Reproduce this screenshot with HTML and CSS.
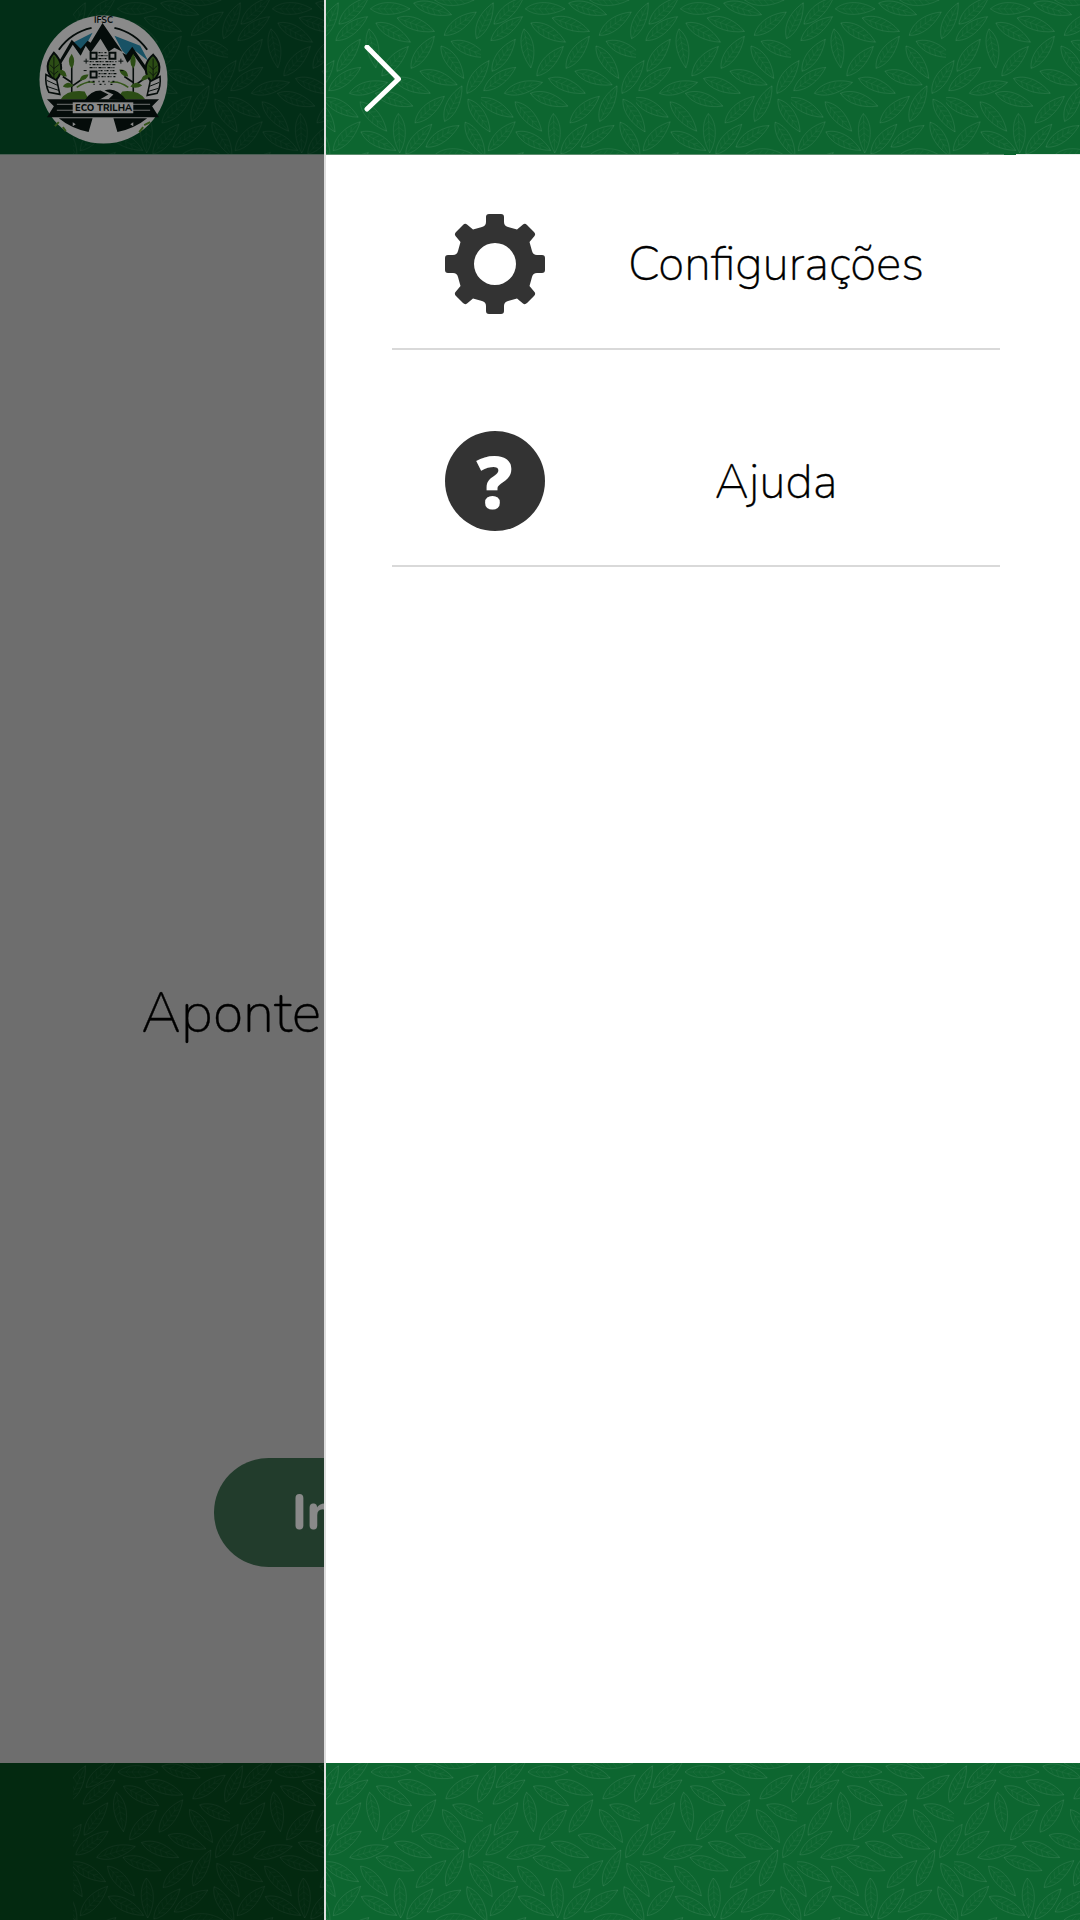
FILE: index.html
```html
<!DOCTYPE html>
<html lang="pt-BR">
<head>
<meta charset="utf-8">
<title>Eco Trilha</title>
<link rel="stylesheet" href="styles.css">
</head>
<body>
<div class="app">
  <header class="bar bar-top">
    <svg class="logo" viewBox="0 0 130 130" role="img" aria-label="Logo Eco Trilha">
      <circle cx="65" cy="65" r="64.5" fill="#f6f6f6"/>
      <text x="65" y="8" class="logo-ifsc">IFSC</text>
      <path d="M20 35 A55 55 0 0 1 53 13 M76 13 A55 55 0 0 1 109 35" fill="none" stroke="#0a1713" stroke-width="2"/>
      <path d="M41 40 L34 28 L54 18 L46 33Z" fill="#2b92b5"/>
      <path d="M76 21 L102 31 L110 46 L97 36 L90 42 L84 36Z" fill="#2b92b5"/>
      <path d="M64 8 L84 37 L76 33 L70 37 L62 24 L52 38 L47 31 L42 41 L34 30 L18 56 L16 54 L33 25 L42 34 L49 26 L52 28Z" fill="#0a1713"/>
      <path d="M94 32 L112 58 L108 58 L96 41 L89 48 L84 38 L88 40Z" fill="#0a1713"/>
      <path d="M15 38 Q7 48 9 56 Q11 63 17 66 Q24 58 22 50 Q21 44 15 38Z" fill="#4f8a26" stroke="#0a1713" stroke-width="2"/>
      <path d="M115 40 Q123 48 121 57 Q119 64 113 67 Q106 60 108 50 Q110 44 115 40Z" fill="#4f8a26" stroke="#0a1713" stroke-width="2"/>
      <path d="M15 42 V64 M11 50 L15 54 M20 50 L15 54 M11 56 L15 60 M20 56 L15 60 M115 44 V65 M111 51 L115 55 M119 51 L115 55 M111 57 L115 61 M119 57 L115 61" fill="none" stroke="#0a1713" stroke-width=".8"/>
      <path d="M7 60 L18 66 L21 80 L10 78 Q6 70 7 60Z M122 62 L112 67 L109 81 L119 79 Q123 72 122 62Z" fill="#f6f6f6" stroke="#0a1713" stroke-width="1.6"/>
      <path d="M8 66 L19 71 M8 72 L20 76 M121 68 L111 72 M120 74 L110 77" fill="none" stroke="#0a1713" stroke-width="1"/>
      <path d="M33 80 V50 M33 68 L24 62 M33 72 L43 65 M95 80 V52 M95 68 L86 62 M95 72 L105 65" stroke="#0a1713" stroke-width="1.6" fill="none"/>
      <path d="M33 54 Q27 47 33 39 Q38 47 33 54Z M26 62 Q20 61 19 55 Q27 54 28 62Z M42 66 Q48 66 50 60 Q42 59 41 66Z M24 72 Q29 65 35 71 Q30 75 24 72Z M95 54 Q89 47 95 39 Q100 47 95 54Z M88 62 Q82 61 81 55 Q89 54 90 62Z M104 66 Q110 66 112 60 Q104 59 103 66Z M92 72 Q98 65 104 71 Q98 75 92 72Z" fill="#4f8a26"/>
      <path d="M22 85 Q28 75 46 77 L50 85Z M107 85 Q100 75 84 77 L78 85Z" fill="#4f8a26"/>
      <path d="M38 73 Q48 66 56 68 M90 73 Q80 66 72 68" fill="none" stroke="#5e9a2e" stroke-width="1.6"/>
      <path d="M46 86 Q52 76 62 76 L70 80 L60 86Z M70 85 L75 80 L66 76 Q78 72 88 86Z" fill="#0a1713"/>
      <path d="M8 85 H121 L114 92 L121 103 H8 L15 92Z" fill="#0a1713"/>
      <path d="M18 90 H112 M18 96 H112" stroke="#f6f6f6" stroke-width=".8"/>
      <rect x="34" y="88" width="61" height="11" fill="#f6f6f6"/>
      <text x="65" y="97" class="logo-name">ECO TRILHA</text>
      <path d="M20 104 H54 L50 118 Q32 114 20 104Z M109 104 H75 L79 118 Q97 114 109 104Z" fill="#0a1713"/>
      <path d="M20 108 L16 112 M27 117 L24 113 M106 111 L112 108 M101 118 L105 113" stroke="#5e9a2e" stroke-width="2"/>
      <path d="M34 108 l3 2 -3 2z M95 108 l-3 2 3 2z" fill="#f6f6f6"/>
      <path class="qr-finder" d="M51 37 h8 v8 h-8z M53 39 v4 h4 v-4z M70 37 h8 v8 h-8z M72 39 v4 h4 v-4z M51 56 h8 v8 h-8z M53 58 v4 h4 v-4z"/>
      <g class="qr-dots">
        <path stroke-dasharray="2 1 1 2" d="M60 38 H69"/>
        <path stroke-dasharray="1 1 3 1" d="M60 41 H69"/>
        <path stroke-dasharray="3 1 1 1 2 1" d="M60 44 H69"/>
        <path stroke-dasharray="2 1 1 2 3 1" d="M51 47 H78"/>
        <path stroke-dasharray="1 2 3 1 2 1" d="M51 50 H78"/>
        <path stroke-dasharray="3 1 1 1 1 2" d="M51 53 H78"/>
        <path stroke-dasharray="1 1 2 2" d="M60 56 H78"/>
        <path stroke-dasharray="2 1 1 1 3 2" d="M60 59 H78"/>
        <path stroke-dasharray="1 2 2 1" d="M60 62 H78"/>
        <path stroke-dasharray="1 3 2 4" d="M50 67 H80"/>
        <path stroke-dasharray="1 5 2 3" d="M55 70 H76"/>
      </g>
      <path d="M45 46.5 h5 M80 46.5 h5 M47.5 44 v5 M82.5 44 v5 M45 56 h3 M82 56 h3" stroke="#0a1713" stroke-width="1"/>
    </svg>
  </header>
  <main class="content">
    <p class="prompt">Aponte a câmera</p>
    <button class="start" type="button">Iniciar leitura</button>
  </main>
  <footer class="bar bar-bottom"></footer>
</div>
<div class="scrim"></div>
<aside class="drawer">
  <div class="drawer-head">
    <svg class="chevron" viewBox="0 0 38 68"><path d="M3 2 L34.5 34 L3 64"/></svg>
  </div>
  <nav class="menu">
    <a class="menu-row">
      <svg class="menu-icon" viewBox="0 0 100 100"><path fill-rule="evenodd" d="M44 0 H56 Q59 0 59 3 V8 Q59 12 63 13 L72 15.5 L78 10.5 Q80 9 82 11 L89 18 Q91 20 89.5 22 L84.5 28 L87 37 Q88 41 92 41 H97 Q100 41 100 44 V56 Q100 59 97 59 H92 Q88 59 87 63 L84.5 72 L89.5 78 Q91 80 89 82 L82 89 Q80 91 78 89.5 L72 84.5 L63 87 Q59 88 59 92 V97 Q59 100 56 100 H44 Q41 100 41 97 V92 Q41 88 37 87 L28 84.5 L22 89.5 Q20 91 18 89 L11 82 Q9 80 10.5 78 L15.5 72 L13 63 Q12 59 8 59 H3 Q0 59 0 56 V44 Q0 41 3 41 H8 Q12 41 13 37 L15.5 28 L10.5 22 Q9 20 11 18 L18 11 Q20 9 22 10.5 L28 15.5 L37 13 Q41 12 41 8 V3 Q41 0 44 0Z M50 29 A21 21 0 1 0 50 71 A21 21 0 1 0 50 29Z"/></svg>
      <span class="menu-label">Configurações</span>
    </a>
    <a class="menu-row">
      <svg class="menu-icon" viewBox="0 0 100 100"><circle cx="50" cy="50" r="50"/><text x="49.5" y="77.5" class="help-mark">?</text></svg>
      <span class="menu-label menu-label-low">Ajuda</span>
    </a>
  </nav>
  <div class="drawer-foot"></div>
</aside>
</body>
</html>
```

FILE: styles.css
```css
* { box-sizing: border-box; }
:root {
  --leaf: url("data:image/svg+xml,%3Csvg xmlns='http://www.w3.org/2000/svg' xmlns:xlink='http://www.w3.org/1999/xlink' viewBox='0 0 157 157'%3E%3Cdefs%3E%3Cg id='l' fill='none' stroke='%23fff' stroke-opacity='.13' stroke-width='.6'%3E%3Cpath d='M-20 0C-11 -8 5 -9 20 0C6 7 -10 8 -20 0Z'/%3E%3Cpath stroke-opacity='.06' d='M-20 0H20M-12 0L-8 -4M-6 0L-2 -5M0 0L4 -5M6 0L10 -3M-12 0L-8 4M-6 0L-2 5M0 0L4 5M6 0L10 3'/%3E%3C/g%3E%3C/defs%3E%3Cuse xlink:href='%23l' transform='translate(28 11) rotate(-42)'/%3E%3Cuse xlink:href='%23l' transform='translate(28 168) rotate(-42)'/%3E%3Cuse xlink:href='%23l' transform='translate(65 9)'/%3E%3Cuse xlink:href='%23l' transform='translate(108 9) rotate(17)'/%3E%3Cuse xlink:href='%23l' transform='translate(136 24) rotate(-36)'/%3E%3Cuse xlink:href='%23l' transform='translate(26 29) rotate(-37)'/%3E%3Cuse xlink:href='%23l' transform='translate(68 33) rotate(29)'/%3E%3Cuse xlink:href='%23l' transform='translate(91 25) rotate(20)'/%3E%3Cuse xlink:href='%23l' transform='translate(4 21) rotate(-65)'/%3E%3Cuse xlink:href='%23l' transform='translate(161 21) rotate(-65)'/%3E%3Cuse xlink:href='%23l' transform='translate(47 49) rotate(80)'/%3E%3Cuse xlink:href='%23l' transform='translate(23 56) rotate(-54)'/%3E%3Cuse xlink:href='%23l' transform='translate(70 62) rotate(-48)'/%3E%3Cuse xlink:href='%23l' transform='translate(98 53) rotate(-54)'/%3E%3Cuse xlink:href='%23l' transform='translate(128 63) rotate(55)'/%3E%3Cuse xlink:href='%23l' transform='translate(145 50) rotate(24)'/%3E%3Cuse xlink:href='%23l' transform='translate(19 80) rotate(-36)'/%3E%3Cuse xlink:href='%23l' transform='translate(43 89) rotate(-16)'/%3E%3Cuse xlink:href='%23l' transform='translate(87 87) rotate(22)'/%3E%3Cuse xlink:href='%23l' transform='translate(114 79) rotate(20)'/%3E%3Cuse xlink:href='%23l' transform='translate(69 101) rotate(19)'/%3E%3Cuse xlink:href='%23l' transform='translate(154 78) rotate(-56)'/%3E%3Cuse xlink:href='%23l' transform='translate(-3 78) rotate(-56)'/%3E%3Cuse xlink:href='%23l' transform='translate(129 105) rotate(-64)'/%3E%3Cuse xlink:href='%23l' transform='translate(105 111) rotate(-42)'/%3E%3Cuse xlink:href='%23l' transform='translate(15 109) rotate(29)'/%3E%3Cuse xlink:href='%23l' transform='translate(48 118) rotate(48)'/%3E%3Cuse xlink:href='%23l' transform='translate(155 117) rotate(56)'/%3E%3Cuse xlink:href='%23l' transform='translate(-2 117) rotate(56)'/%3E%3Cuse xlink:href='%23l' transform='translate(74 135) rotate(88)'/%3E%3Cuse xlink:href='%23l' transform='translate(21 138) rotate(-47)'/%3E%3Cuse xlink:href='%23l' transform='translate(53 143) rotate(28)'/%3E%3Cuse xlink:href='%23l' transform='translate(94 141) rotate(-49)'/%3E%3Cuse xlink:href='%23l' transform='translate(118 138) rotate(-33)'/%3E%3Cuse xlink:href='%23l' transform='translate(151 141) rotate(60)'/%3E%3Cuse xlink:href='%23l' transform='translate(-6 141) rotate(60)'/%3E%3Cuse xlink:href='%23l' transform='translate(130 157)'/%3E%3Cuse xlink:href='%23l' transform='translate(130 0)'/%3E%3C/svg%3E");
}
html, body { margin: 0; width: 1080px; height: 1920px; overflow: hidden; }
body { position: relative; font-family: "Nunito", "Lato", "Noto Sans", sans-serif; color: #000; }

.app { display: flex; flex-direction: column; height: 1920px; background: #c4c4c4; }
.bar { position: relative; flex: none; }
.bar::before {
  content: ""; position: absolute; top: 0; right: 0; bottom: 0; left: 73px;
  background: var(--leaf) 0 0 / 157px 157px repeat;
}
.bar-top {
  height: 155px; padding: 15px 0 0 39px;
  background: #05532a; border-bottom: 1px solid #86a896;
}
.bar-top::before { background-size: 155px 155px; }
.bar-bottom { height: 157px; background: #064a1e; }
.logo { position: relative; display: block; width: 129px; height: 129px; overflow: visible; }
.logo-ifsc { font: 700 9px "Nunito", sans-serif; text-anchor: middle; fill: #0a1713; }
.logo-name { font: 800 9.5px "Nunito", sans-serif; text-anchor: middle; fill: #0a1713; }
.qr-finder { fill: #0a1713; fill-rule: evenodd; }
.qr-dots { fill: none; stroke: #0a1713; stroke-width: 1.3; }

.content { flex: 1; display: flex; flex-direction: column; padding-top: 829px; }
.prompt { margin: 0 0 0 141px; font-size: 56px; font-weight: 200; -webkit-text-stroke: .35px #000; line-height: 60px; white-space: nowrap; }
.start {
  margin: 414px 0 0 214px; width: 652px; height: 109px; padding: 0 0 0 78px;
  border: 0; border-radius: 55px; background: #3d6b4f; color: #f4f4f4;
  font: 800 50px "Nunito", sans-serif; text-align: left;
}

.scrim { position: absolute; inset: 0; background: rgba(0, 0, 0, .44); }

.drawer {
  position: absolute; top: 0; bottom: 0; left: 324px; right: 0;
  display: flex; flex-direction: column;
  border-left: 2px solid #dedede; background: #fff;
}
.drawer-head {
  position: relative; height: 155px; flex: none; display: flex; align-items: center; padding-left: 38px;
  background: var(--leaf) 0 0 / 155px 155px, #0d6630;
  border-bottom: 1px solid #5d8d6f;
}
.drawer-head::after {
  content: ""; position: absolute; right: 0; bottom: -1px; width: 76px; height: 1px;
  background: linear-gradient(90deg, #0d6630 12px, #e6efe9 12px);
}
.chevron { display: block; width: 38px; height: 68px; margin-top: 3px; }
.chevron path { fill: none; stroke: #fff; stroke-width: 5; stroke-linecap: round; stroke-linejoin: round; }

.menu { flex: 1; padding: 0 80px 0 66px; }
.menu-row {
  display: flex; align-items: center; padding: 59px 0 34px 53px;
  border-bottom: 2px solid #d9d9d9;
}
.menu-row + .menu-row { padding-top: 81px; }
.menu-icon { display: block; flex: none; width: 100px; height: 100px; fill: #333; }
.help-mark { font: 800 72px "Open Sans", sans-serif; text-anchor: middle; fill: #fff; }
.menu-label { flex: 1; margin-left: 7px; text-align: center; font-size: 48px; font-weight: 200; -webkit-text-stroke: .3px #000; line-height: 60px; }
.menu-label-low { padding-top: 2px; }

.drawer-foot {
  height: 157px; flex: none;
  background: var(--leaf) 0 0 / 157px 157px, #0d6630;
}
```
